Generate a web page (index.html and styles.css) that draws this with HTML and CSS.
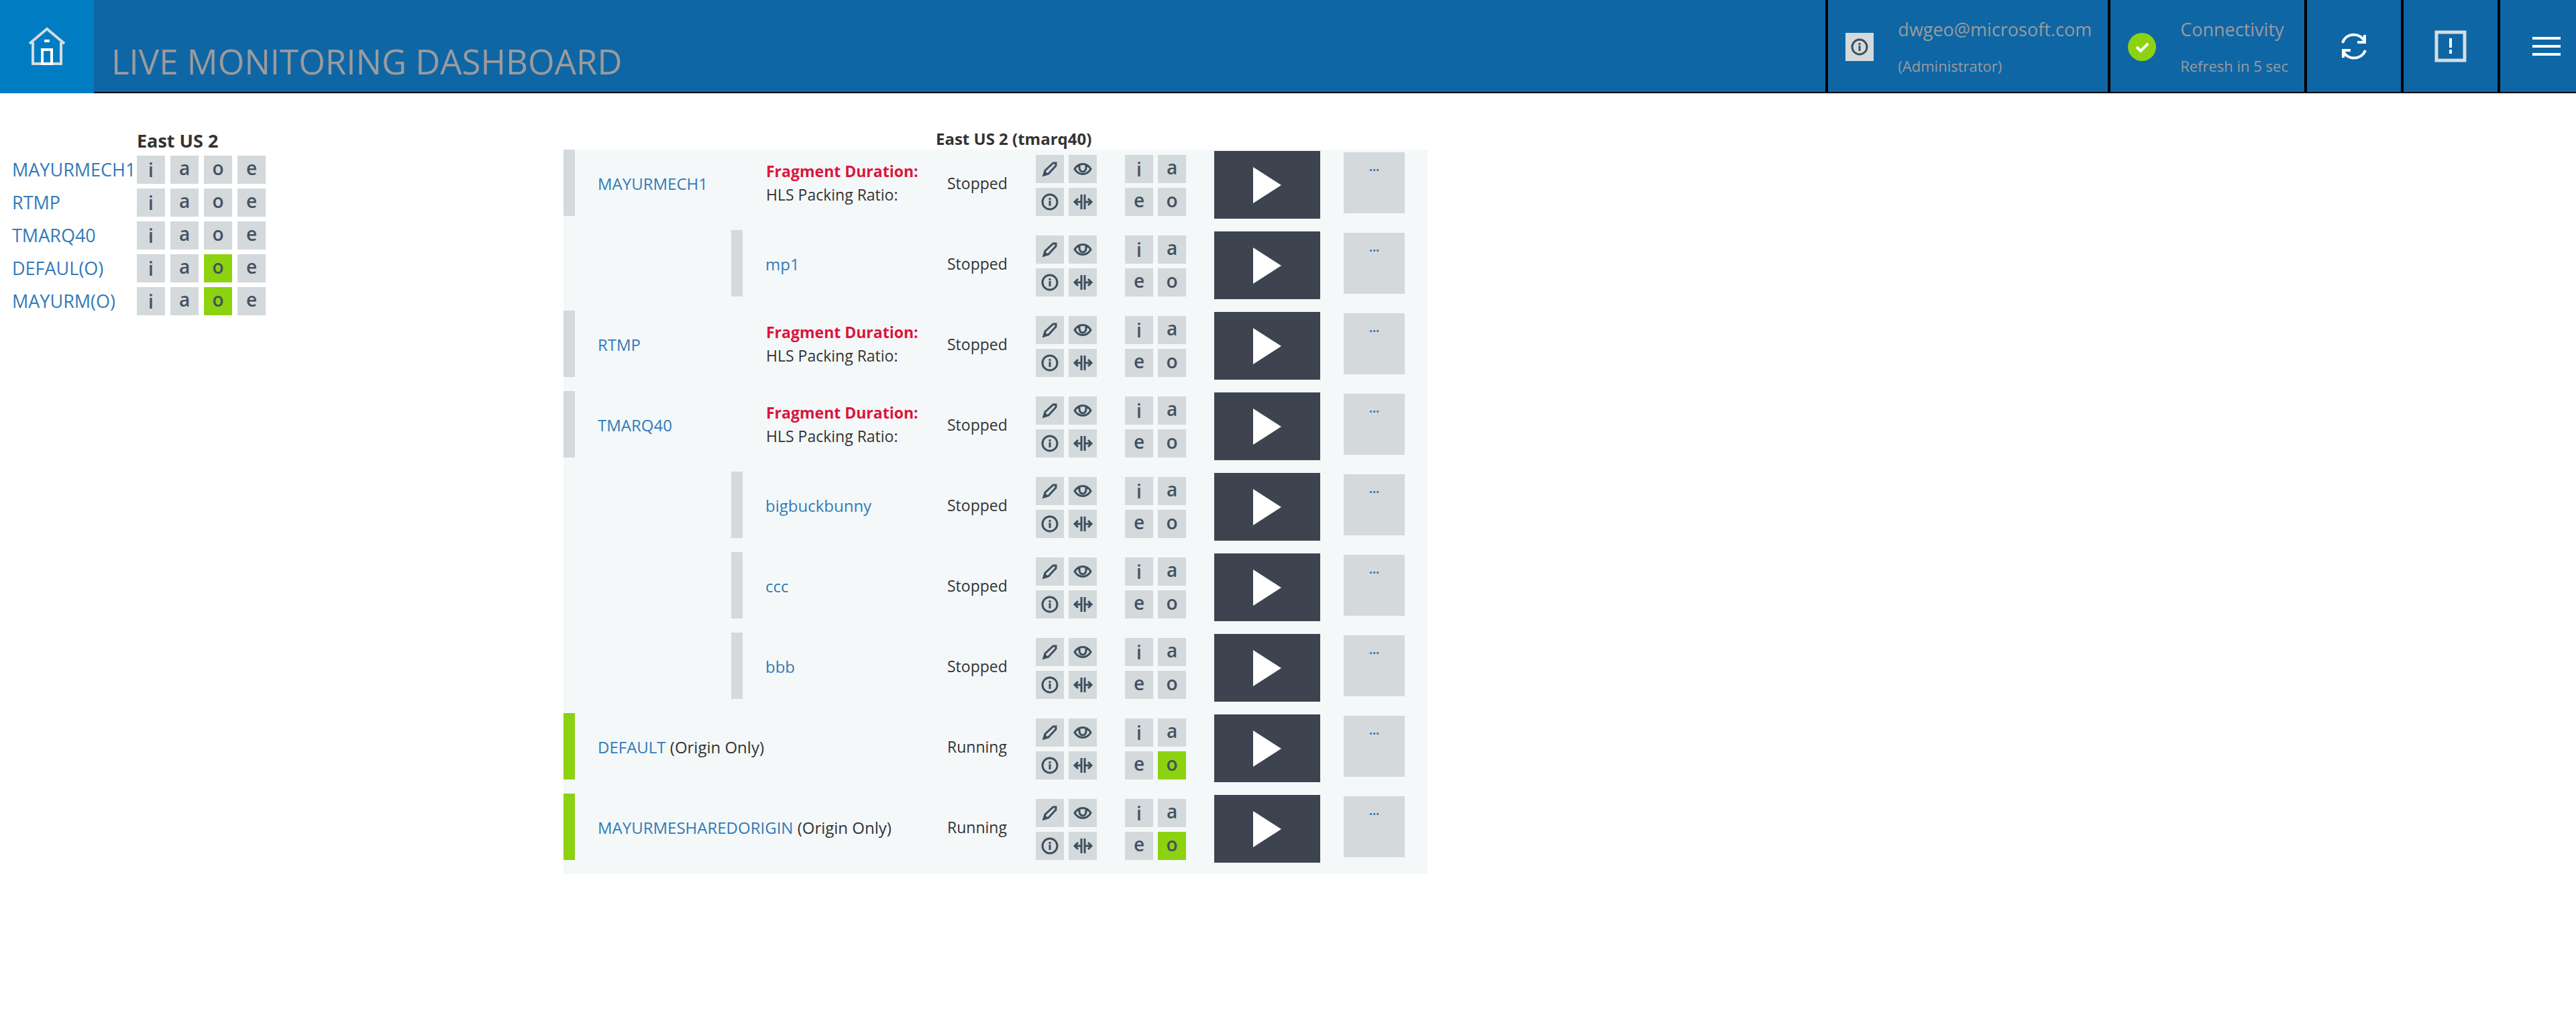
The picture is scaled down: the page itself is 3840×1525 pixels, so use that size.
FILE: index.html
```html
<!DOCTYPE html>
<html lang="en">
<head>
<meta charset="utf-8">
<title>Live Monitoring Dashboard</title>
<link rel="stylesheet" href="styles.css">
</head>
<body>
<svg class="sprite" aria-hidden="true">
  <symbol id="pencil" viewBox="0 0 42 42"><path d="M12 30l2-7L26 12h4v4L19 28z"/><path class="fill" d="M10 32l3-9 6 6z"/></symbol>
  <symbol id="eye" viewBox="0 0 42 42"><path d="M9 21c6-10 18-10 24 0c-6 10-18 10-24 0z M16 14v5a5 6 0 0 0 10 0v-5"/></symbol>
  <symbol id="info" viewBox="0 0 42 42"><circle cx="21" cy="21" r="11"/><path d="M21 15v3 M21 19v8"/></symbol>
  <symbol id="split" viewBox="0 0 42 42"><path d="M19 10v22 M24 10v22 M18 21H9 M14 16l-5 5l5 5 M25 21h8 M29 16l5 5l-5 5"/></symbol>
</svg>

<header class="topbar">
  <a class="home" href="#" aria-label="Home">
    <svg viewBox="0 0 80 80"><path class="walls" d="M14 35L40 13L66 35 M19 33v32h42V33"/><path class="door" d="M33 65V44h14v21z M36 31h8"/></svg>
  </a>
  <div class="bar">
    <h1>LIVE MONITORING DASHBOARD</h1>
    <div class="cell">
      <span class="tile badge"><svg><use href="#info"/></svg></span>
      <div class="lines"><p>dwgeo@microsoft.com</p><p class="sub">(Administrator)</p></div>
    </div>
    <div class="cell">
      <svg class="check badge" viewBox="0 0 42 42"><circle cx="21" cy="21" r="21"/><path d="M13 21l6 6L30 16"/></svg>
      <div class="lines"><p>Connectivity</p><p class="sub">Refresh in 5 sec</p></div>
    </div>
    <button class="tool" aria-label="Refresh"><svg viewBox="0 0 42 42"><path d="M4 16C9 0 31 0 37 14 M37 4v11H26 M5 38V27h11 M38 27C32 42 10 42 5 28"/></svg></button>
    <button class="tool alert" aria-label="Alerts"><svg viewBox="0 0 48 48"><path class="frame" d="M3 3h42v42H3z"/><path d="M24 12v14 M24 29v6"/></svg></button>
    <button class="tool menu" aria-label="Menu"><svg viewBox="0 0 42 42"><path d="M0 9h42 M0 21h42 M0 33h42"/></svg></button>
  </div>
</header>

<main>
  <section class="summary">
    <table>
      <thead><tr><td></td><th scope="col">East US 2</th></tr></thead>
      <tbody>
        <tr><th scope="row"><a href="#">MAYURMECH1</a></th><td><div class="strip"><span class="tile i">i</span><span class="tile">a</span><span class="tile">o</span><span class="tile">e</span></div></td></tr>
        <tr><th scope="row"><a href="#">RTMP</a></th><td><div class="strip"><span class="tile i">i</span><span class="tile">a</span><span class="tile">o</span><span class="tile">e</span></div></td></tr>
        <tr><th scope="row"><a href="#">TMARQ40</a></th><td><div class="strip"><span class="tile i">i</span><span class="tile">a</span><span class="tile">o</span><span class="tile">e</span></div></td></tr>
        <tr><th scope="row"><a href="#">DEFAUL(O)</a></th><td><div class="strip"><span class="tile i">i</span><span class="tile">a</span><span class="tile on">o</span><span class="tile">e</span></div></td></tr>
        <tr><th scope="row"><a href="#">MAYURM(O)</a></th><td><div class="strip"><span class="tile i">i</span><span class="tile">a</span><span class="tile on">o</span><span class="tile">e</span></div></td></tr>
      </tbody>
    </table>
  </section>

  <section class="channels">
    <table>
      <caption>East US 2 (tmarq40)</caption>
      <colgroup><col class="c-name"><col class="c-info"><col class="c-state"><col class="c-grid"><col class="c-grid"><col class="c-play"><col class="c-more"></colgroup>
      <tbody>
        <tr>
          <td><div class="name"><a href="#">MAYURMECH1</a></div></td>
          <td><div class="info"><p class="warn">Fragment Duration:</p><p>HLS Packing Ratio:</p></div></td>
          <td><div class="state">Stopped</div></td>
          <td><div class="quad"><button class="tile" aria-label="Edit"><svg><use href="#pencil"/></svg></button><button class="tile" aria-label="View"><svg><use href="#eye"/></svg></button><button class="tile" aria-label="Info"><svg><use href="#info"/></svg></button><button class="tile" aria-label="Split"><svg><use href="#split"/></svg></button></div></td>
          <td><div class="quad"><span class="tile i">i</span><span class="tile">a</span><span class="tile">e</span><span class="tile">o</span></div></td>
          <td><button class="play" aria-label="Play"><svg viewBox="0 0 42 54"><path d="M0 0L42 27L0 54z"/></svg></button></td>
          <td><a class="more" href="#">...</a></td>
        </tr>
        <tr>
          <td></td>
          <td><div class="name program"><a href="#">mp1</a></div></td>
          <td><div class="state">Stopped</div></td>
          <td><div class="quad"><button class="tile" aria-label="Edit"><svg><use href="#pencil"/></svg></button><button class="tile" aria-label="View"><svg><use href="#eye"/></svg></button><button class="tile" aria-label="Info"><svg><use href="#info"/></svg></button><button class="tile" aria-label="Split"><svg><use href="#split"/></svg></button></div></td>
          <td><div class="quad"><span class="tile i">i</span><span class="tile">a</span><span class="tile">e</span><span class="tile">o</span></div></td>
          <td><button class="play" aria-label="Play"><svg viewBox="0 0 42 54"><path d="M0 0L42 27L0 54z"/></svg></button></td>
          <td><a class="more" href="#">...</a></td>
        </tr>
        <tr>
          <td><div class="name"><a href="#">RTMP</a></div></td>
          <td><div class="info"><p class="warn">Fragment Duration:</p><p>HLS Packing Ratio:</p></div></td>
          <td><div class="state">Stopped</div></td>
          <td><div class="quad"><button class="tile" aria-label="Edit"><svg><use href="#pencil"/></svg></button><button class="tile" aria-label="View"><svg><use href="#eye"/></svg></button><button class="tile" aria-label="Info"><svg><use href="#info"/></svg></button><button class="tile" aria-label="Split"><svg><use href="#split"/></svg></button></div></td>
          <td><div class="quad"><span class="tile i">i</span><span class="tile">a</span><span class="tile">e</span><span class="tile">o</span></div></td>
          <td><button class="play" aria-label="Play"><svg viewBox="0 0 42 54"><path d="M0 0L42 27L0 54z"/></svg></button></td>
          <td><a class="more" href="#">...</a></td>
        </tr>
        <tr>
          <td><div class="name"><a href="#">TMARQ40</a></div></td>
          <td><div class="info"><p class="warn">Fragment Duration:</p><p>HLS Packing Ratio:</p></div></td>
          <td><div class="state">Stopped</div></td>
          <td><div class="quad"><button class="tile" aria-label="Edit"><svg><use href="#pencil"/></svg></button><button class="tile" aria-label="View"><svg><use href="#eye"/></svg></button><button class="tile" aria-label="Info"><svg><use href="#info"/></svg></button><button class="tile" aria-label="Split"><svg><use href="#split"/></svg></button></div></td>
          <td><div class="quad"><span class="tile i">i</span><span class="tile">a</span><span class="tile">e</span><span class="tile">o</span></div></td>
          <td><button class="play" aria-label="Play"><svg viewBox="0 0 42 54"><path d="M0 0L42 27L0 54z"/></svg></button></td>
          <td><a class="more" href="#">...</a></td>
        </tr>
        <tr>
          <td></td>
          <td><div class="name program"><a href="#">bigbuckbunny</a></div></td>
          <td><div class="state">Stopped</div></td>
          <td><div class="quad"><button class="tile" aria-label="Edit"><svg><use href="#pencil"/></svg></button><button class="tile" aria-label="View"><svg><use href="#eye"/></svg></button><button class="tile" aria-label="Info"><svg><use href="#info"/></svg></button><button class="tile" aria-label="Split"><svg><use href="#split"/></svg></button></div></td>
          <td><div class="quad"><span class="tile i">i</span><span class="tile">a</span><span class="tile">e</span><span class="tile">o</span></div></td>
          <td><button class="play" aria-label="Play"><svg viewBox="0 0 42 54"><path d="M0 0L42 27L0 54z"/></svg></button></td>
          <td><a class="more" href="#">...</a></td>
        </tr>
        <tr>
          <td></td>
          <td><div class="name program"><a href="#">ccc</a></div></td>
          <td><div class="state">Stopped</div></td>
          <td><div class="quad"><button class="tile" aria-label="Edit"><svg><use href="#pencil"/></svg></button><button class="tile" aria-label="View"><svg><use href="#eye"/></svg></button><button class="tile" aria-label="Info"><svg><use href="#info"/></svg></button><button class="tile" aria-label="Split"><svg><use href="#split"/></svg></button></div></td>
          <td><div class="quad"><span class="tile i">i</span><span class="tile">a</span><span class="tile">e</span><span class="tile">o</span></div></td>
          <td><button class="play" aria-label="Play"><svg viewBox="0 0 42 54"><path d="M0 0L42 27L0 54z"/></svg></button></td>
          <td><a class="more" href="#">...</a></td>
        </tr>
        <tr>
          <td></td>
          <td><div class="name program"><a href="#">bbb</a></div></td>
          <td><div class="state">Stopped</div></td>
          <td><div class="quad"><button class="tile" aria-label="Edit"><svg><use href="#pencil"/></svg></button><button class="tile" aria-label="View"><svg><use href="#eye"/></svg></button><button class="tile" aria-label="Info"><svg><use href="#info"/></svg></button><button class="tile" aria-label="Split"><svg><use href="#split"/></svg></button></div></td>
          <td><div class="quad"><span class="tile i">i</span><span class="tile">a</span><span class="tile">e</span><span class="tile">o</span></div></td>
          <td><button class="play" aria-label="Play"><svg viewBox="0 0 42 54"><path d="M0 0L42 27L0 54z"/></svg></button></td>
          <td><a class="more" href="#">...</a></td>
        </tr>
        <tr>
          <td colspan="2"><div class="name running"><span><a href="#">DEFAULT</a> (Origin Only)</span></div></td>
          <td><div class="state">Running</div></td>
          <td><div class="quad"><button class="tile" aria-label="Edit"><svg><use href="#pencil"/></svg></button><button class="tile" aria-label="View"><svg><use href="#eye"/></svg></button><button class="tile" aria-label="Info"><svg><use href="#info"/></svg></button><button class="tile" aria-label="Split"><svg><use href="#split"/></svg></button></div></td>
          <td><div class="quad"><span class="tile i">i</span><span class="tile">a</span><span class="tile">e</span><span class="tile on">o</span></div></td>
          <td><button class="play" aria-label="Play"><svg viewBox="0 0 42 54"><path d="M0 0L42 27L0 54z"/></svg></button></td>
          <td><a class="more" href="#">...</a></td>
        </tr>
        <tr>
          <td colspan="2"><div class="name running"><span><a href="#">MAYURMESHAREDORIGIN</a> (Origin Only)</span></div></td>
          <td><div class="state">Running</div></td>
          <td><div class="quad"><button class="tile" aria-label="Edit"><svg><use href="#pencil"/></svg></button><button class="tile" aria-label="View"><svg><use href="#eye"/></svg></button><button class="tile" aria-label="Info"><svg><use href="#info"/></svg></button><button class="tile" aria-label="Split"><svg><use href="#split"/></svg></button></div></td>
          <td><div class="quad"><span class="tile i">i</span><span class="tile">a</span><span class="tile">e</span><span class="tile on">o</span></div></td>
          <td><button class="play" aria-label="Play"><svg viewBox="0 0 42 54"><path d="M0 0L42 27L0 54z"/></svg></button></td>
          <td><a class="more" href="#">...</a></td>
        </tr>
      </tbody>
    </table>
  </section>
</main>
</body>
</html>
```
FILE: styles.css
```css
* { box-sizing: border-box; }

body {
  margin: 0;
  background: #fff;
  color: #333;
  font-family: "Open Sans", "Noto Sans", sans-serif;
  font-size: 24px;
}

p, h1 { margin: 0; }
a { color: #337ab7; text-decoration: none; }
button { padding: 0; border: 0; background: none; font: inherit; color: inherit; }
svg { display: block; fill: none; }
table { border-collapse: collapse; }
td, th { padding: 0; }
.sprite { display: none; }

/* Top bar */
.topbar { display: flex; height: 139px; }

.home {
  display: flex;
  flex: none;
  align-items: center;
  justify-content: center;
  width: 140px;
  background: #007cc3;
}
.home svg { width: 80px; height: 80px; stroke-width: 4; }
.walls { stroke: #d5dce1; }
.door { stroke: #fff; }

.bar {
  display: flex;
  flex: 1;
  background: #0f66a5;
  border-bottom: 2px solid #000;
  color: #9b9b9d;
}
.bar h1 {
  flex: 1;
  padding: 61px 0 0 26px;
  font-size: 51px;
  font-weight: 400;
  line-height: 60px;
  white-space: nowrap;
}
.cell {
  display: flex;
  gap: 36px;
  padding: 17px 24px 0 26px;
  border-left: 4px solid #000;
}
.badge { flex: none; margin-top: 32px; }
.lines { font-size: 27px; line-height: 54px; white-space: nowrap; }
.sub { font-size: 22px; }
.check { width: 42px; height: 42px; fill: #8cd211; }
.check path { fill: none; stroke: #fff; stroke-width: 4; }

.tool {
  display: flex;
  align-items: center;
  justify-content: center;
  width: 144px;
  border-left: 4px solid #000;
}
.tool svg { width: 42px; height: 42px; stroke: #fff; stroke-width: 4; }
.alert svg { width: 48px; height: 48px; }
.alert .frame { stroke: #d5dce1; stroke-width: 5; }
.menu { justify-content: flex-start; width: 117px; padding-left: 48px; }

/* Small square tiles */
.tile {
  display: block;
  width: 42px;
  height: 42px;
  background: #d4d9dc;
  color: #43525f;
  font-size: 28px;
  font-weight: 600;
  line-height: 36px;
  text-align: center;
}
.tile.i { line-height: 42px; }
.tile.on { background: #8cd211; }
.tile svg { width: 42px; height: 42px; stroke: #3d4f5e; stroke-width: 3; }
.fill { fill: #3d4f5e; stroke: none; }

/* Content */
main { display: flex; padding-top: 52px; }

.summary { flex: none; width: 840px; padding-left: 18px; font-size: 27px; }
.summary thead th { padding-bottom: 3px; line-height: 38px; text-align: left; }
.summary tbody th {
  width: 186px;
  font-weight: 400;
  line-height: 42px;
  text-align: left;
  vertical-align: top;
}
.summary tbody tr { height: 49px; }
.summary tbody td { vertical-align: top; }
.strip { display: flex; gap: 8px; }

.channels table { width: 1288px; table-layout: fixed; }
.channels caption {
  padding-left: 555px;
  font-weight: 700;
  line-height: 32px;
  text-align: left;
}
.channels tbody { background: #f4f8f9; }
.channels tr { height: 120px; }
.channels td { vertical-align: top; }
.c-name { width: 250px; }
.c-info { width: 322px; }
.c-state { width: 132px; }
.c-grid { width: 133px; }
.c-play { width: 193px; }
.c-more { width: 125px; }

.name, .info, .state { height: 99px; }
.name {
  padding-left: 34px;
  border-left: 17px solid #d4d9dc;
  line-height: 101px;
}
.running { border-color: #8cd211; }
.info { padding: 15px 0 0 52px; font-size: 23px; line-height: 35px; }
.warn { color: #dc143c; font-weight: 700; }
.state { font-size: 23px; line-height: 101px; }

.quad {
  display: grid;
  grid-template-columns: 42px 42px;
  gap: 7px;
  padding-top: 8px;
}

.play {
  display: block;
  width: 158px;
  height: 101px;
  margin-top: 2px;
  padding-left: 58px;
  background: #3d444f;
}
.play svg { width: 42px; height: 54px; fill: #fff; }

.more {
  display: block;
  width: 91px;
  height: 91px;
  margin-top: 4px;
  padding-top: 7px;
  background: #d4d9dc;
  font-size: 18px;
  font-weight: 700;
  line-height: 28px;
  text-align: center;
}
```
